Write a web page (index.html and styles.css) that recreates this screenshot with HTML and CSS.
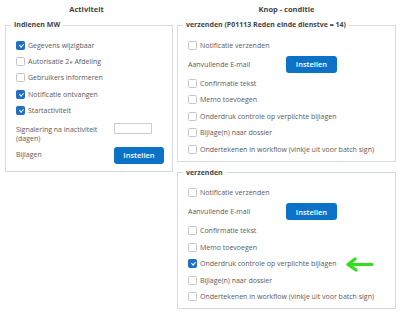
FILE: index.html
```html
<!DOCTYPE html>
<html>
  <head>
    <title>Activiteit - Knop conditie</title>
    <link rel="stylesheet" href="styles.css">
  </head>
  <body>
    <div class="page">
      <div class="col col-left">
        <h3 class="col-title">Activiteit</h3>
        <fieldset class="group">
          <legend>Indienen MW</legend>
          <div class="row"><span class="cb on"></span>Gegevens wijzigbaar</div>
          <div class="row"><span class="cb"></span>Autorisatie 2<sup>e</sup>&nbsp;Afdeling</div>
          <div class="row"><span class="cb"></span>Gebruikers informeren</div>
          <div class="row"><span class="cb on"></span>Notificatie ontvangen</div>
          <div class="row"><span class="cb on"></span>Startactiviteit</div>
          <div class="field">
            <span class="label">Signalering na inactiviteit (dagen)</span>
            <span class="input"></span>
          </div>
          <div class="field">
            <span class="label">Bijlagen</span>
            <button type="button">Instellen</button>
          </div>
        </fieldset>
      </div>

      <div class="col col-right">
        <h3 class="col-title">Knop - conditie</h3>
        <fieldset class="group">
          <legend>verzenden (P01113 Reden einde dienstve = 14)</legend>
          <div class="row"><span class="cb"></span>Notificatie verzenden</div>
          <div class="field field-btn">
            <span class="label">Aanvullende E-mail</span>
            <button type="button">Instellen</button>
          </div>
          <div class="row"><span class="cb"></span>Confirmatie tekst</div>
          <div class="row"><span class="cb"></span>Memo toevoegen</div>
          <div class="row"><span class="cb"></span>Onderdruk controle op verplichte bijlagen</div>
          <div class="row"><span class="cb"></span>Bijlage(n) naar dossier</div>
          <div class="row"><span class="cb"></span>Ondertekenen in workflow (vinkje uit voor batch sign)</div>
        </fieldset>

        <fieldset class="group">
          <legend>verzenden</legend>
          <div class="row"><span class="cb"></span>Notificatie verzenden</div>
          <div class="field field-btn">
            <span class="label">Aanvullende E-mail</span>
            <button type="button">Instellen</button>
          </div>
          <div class="row"><span class="cb"></span>Confirmatie tekst</div>
          <div class="row"><span class="cb"></span>Memo toevoegen</div>
          <div class="row"><span class="cb on"></span>Onderdruk controle op verplichte bijlagen</div>
          <div class="row"><span class="cb"></span>Bijlage(n) naar dossier</div>
          <div class="row"><span class="cb"></span>Ondertekenen in workflow (vinkje uit voor batch sign)</div>
        </fieldset>
      </div>

      <svg class="arrow" width="32" height="16" viewBox="0 0 32 16">
        <path d="M28 7.5 H4 M11 2 L4 7.5 L12 13" fill="none" stroke="#2fe01a" stroke-width="3.2" stroke-linecap="round" stroke-linejoin="round"/>
      </svg>
    </div>
  </body>
</html>
```

FILE: styles.css
```css
body {
  font-family: "Open Sans", "Liberation Sans", sans-serif;
  background-color: #ffffff;
  color: #5a5a5a;
  font-size: 7px;
  margin: 0;
  padding: 0;
}

.page {
  position: relative;
  display: grid;
  grid-template-columns: 173px 219px;
  column-gap: 4px;
}

.col-title {
  margin: 4px 0 6px;
  font-size: 7.5px;
  line-height: 10px;
  font-weight: 700;
  color: #454545;
  text-align: center;
}

.col-left .group {
  margin-left: 5px;
}

.group {
  border: 1px solid #d5dadf;
  margin: 0 0 6px;
  padding: 7px 8px 3px 10px;
  min-width: 0;
}

.col-left .group {
  padding-bottom: 7px;
}

legend {
  padding: 0 3px;
  margin-left: -5px;
  font-weight: 700;
  line-height: 10px;
  color: #454545;
}

.row {
  display: flex;
  align-items: center;
  height: 16.5px;
  white-space: nowrap;
}

.col-left .row {
  height: 16.4px;
}

sup {
  font-size: 5px;
  line-height: 0;
  vertical-align: 3px;
  margin-left: 0.5px;
}

.cb {
  position: relative;
  width: 9px;
  height: 9px;
  box-sizing: border-box;
  border: 1px solid #c2c6ca;
  border-radius: 1.5px;
  background-color: #ffffff;
  margin-right: 3px;
  flex-shrink: 0;
}

.cb.on {
  background-color: #1f6fc5;
  border-color: #1f6fc5;
}

.cb.on::after {
  content: "";
  position: absolute;
  left: 2.6px;
  top: 1.2px;
  width: 1.6px;
  height: 3.2px;
  border: solid #ffffff;
  border-width: 0 1px 1px 0;
  transform: rotate(45deg);
}

.field {
  display: flex;
  align-items: flex-start;
  margin-top: 3px;
}

.field-btn {
  align-items: center;
  height: 21.5px;
  margin-top: 0;
}

.label {
  width: 98px;
  padding-top: 3px;
  line-height: 9.5px;
  flex-shrink: 0;
}

.field-btn .label {
  padding-top: 0;
}

.input {
  width: 38px;
  height: 11px;
  margin-top: 1px;
  box-sizing: border-box;
  border: 1px solid #c9cdd1;
  background-color: #ffffff;
}

button {
  width: 51px;
  height: 17px;
  padding: 0;
  background-color: #0b72c7;
  border: none;
  border-radius: 3px;
  color: #ffffff;
  font-family: "Open Sans", "Liberation Sans", sans-serif;
  font-size: 7.5px;
  font-weight: 600;
  cursor: pointer;
}

.arrow {
  position: absolute;
  left: 344px;
  top: 257px;
}
```
